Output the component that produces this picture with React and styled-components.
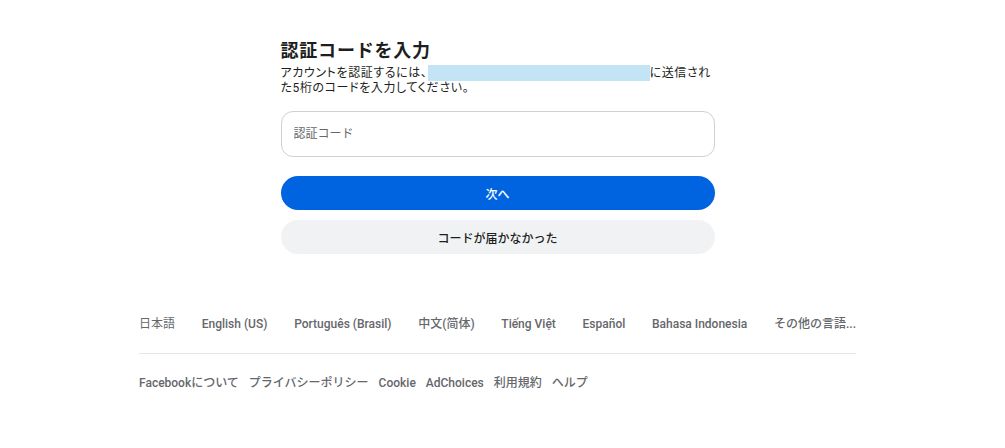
import React, { useState } from 'react';
import styled, { createGlobalStyle } from 'styled-components';

const GlobalStyle = createGlobalStyle`
  body {
    margin: 0;
    background: #ffffff;
    font-family: Roboto, "Noto Sans CJK JP", "Liberation Sans", sans-serif;
    color: #1c1e21;
  }
`;

const Page = styled.div`
  width: 995px;
  display: flex;
  flex-direction: column;
  align-items: center;
`;

const Card = styled.main`
  width: 434px;
  padding-top: 39px;
  display: flex;
  flex-direction: column;
`;

const Title = styled.h2`
  margin: 0;
  font-size: 18px;
  line-height: 24px;
  font-weight: 700;
  letter-spacing: 0.8px;
  color: #1c1e21;
`;

const Subtitle = styled.p`
  margin: 2px 0 0;
  font-size: 12px;
  line-height: 15px;
  color: #1c1e21;
  width: 434px;
  font-feature-settings: "palt";
  letter-spacing: 0.6px;
`;

const Redacted = styled.span`
  display: inline-block;
  width: 222px;
  height: 16px;
  vertical-align: -4px;
  background-color: #c3e4f5;
`;

const Form = styled.form`
  display: flex;
  flex-direction: column;
  margin-top: 15px;
`;

const Input = styled.input`
  box-sizing: border-box;
  height: 46px;
  padding: 0 12px;
  border: 1px solid #ced0d4;
  border-radius: 12px;
  font-family: inherit;
  font-size: 12px;
  color: #1c1e21;
  &::placeholder {
    color: #65676b;
  }
  &:focus {
    outline: none;
    border-color: #0064e0;
  }
`;

const Button = styled.button`
  height: 34px;
  border: none;
  border-radius: 17px;
  font-family: inherit;
  font-size: 12px;
  font-weight: 500;
  cursor: pointer;
  background-color: ${(p) => (p.$secondary ? '#f1f2f4' : '#0064e0')};
  color: ${(p) => (p.$secondary ? '#1c1e21' : '#ffffff')};
  margin-top: ${(p) => (p.$secondary ? '10px' : '19px')};
`;

const Footer = styled.footer`
  width: 717px;
  margin-top: 61px;
  display: flex;
  flex-direction: column;
`;

const LangRow = styled.ul`
  list-style: none;
  margin: 0;
  padding: 0 0 20px;
  display: flex;
  justify-content: space-between;
  border-bottom: 1px solid #e4e6eb;
`;

const LinkRow = styled.ul`
  list-style: none;
  margin: 0;
  padding: 20px 0 0;
  display: flex;
  gap: 10px;
`;

const FooterLink = styled.li`
  font-size: 12px;
  line-height: 18px;
  font-weight: ${(p) => (p.$current ? 400 : 500)};
  color: #65676b;
  white-space: nowrap;
  cursor: ${(p) => (p.$current ? 'default' : 'pointer')};
`;

const languages = [
  '日本語',
  'English (US)',
  'Português (Brasil)',
  '中文(简体)',
  'Tiếng Việt',
  'Español',
  'Bahasa Indonesia',
  'その他の言語...',
];

const links = ['Facebookについて', 'プライバシーポリシー', 'Cookie', 'AdChoices', '利用規約', 'ヘルプ'];

const App = () => {
  const [code, setCode] = useState('');

  return (
    <>
      <GlobalStyle />
      <Page>
        <Card>
          <Title>認証コードを入力</Title>
          <Subtitle>
            アカウントを認証するには、<Redacted />に送信された5桁のコードを入力してください。
          </Subtitle>
          <Form onSubmit={(e) => e.preventDefault()}>
            <Input
              type="text"
              placeholder="認証コード"
              value={code}
              onChange={(e) => setCode(e.target.value)}
            />
            <Button type="submit">次へ</Button>
            <Button type="button" $secondary>
              コードが届かなかった
            </Button>
          </Form>
        </Card>
        <Footer>
          <LangRow>
            {languages.map((l, i) => (
              <FooterLink key={l} $current={i === 0}>
                {l}
              </FooterLink>
            ))}
          </LangRow>
          <LinkRow>
            {links.map((l) => (
              <FooterLink key={l}>{l}</FooterLink>
            ))}
          </LinkRow>
        </Footer>
      </Page>
    </>
  );
};

export default App;
